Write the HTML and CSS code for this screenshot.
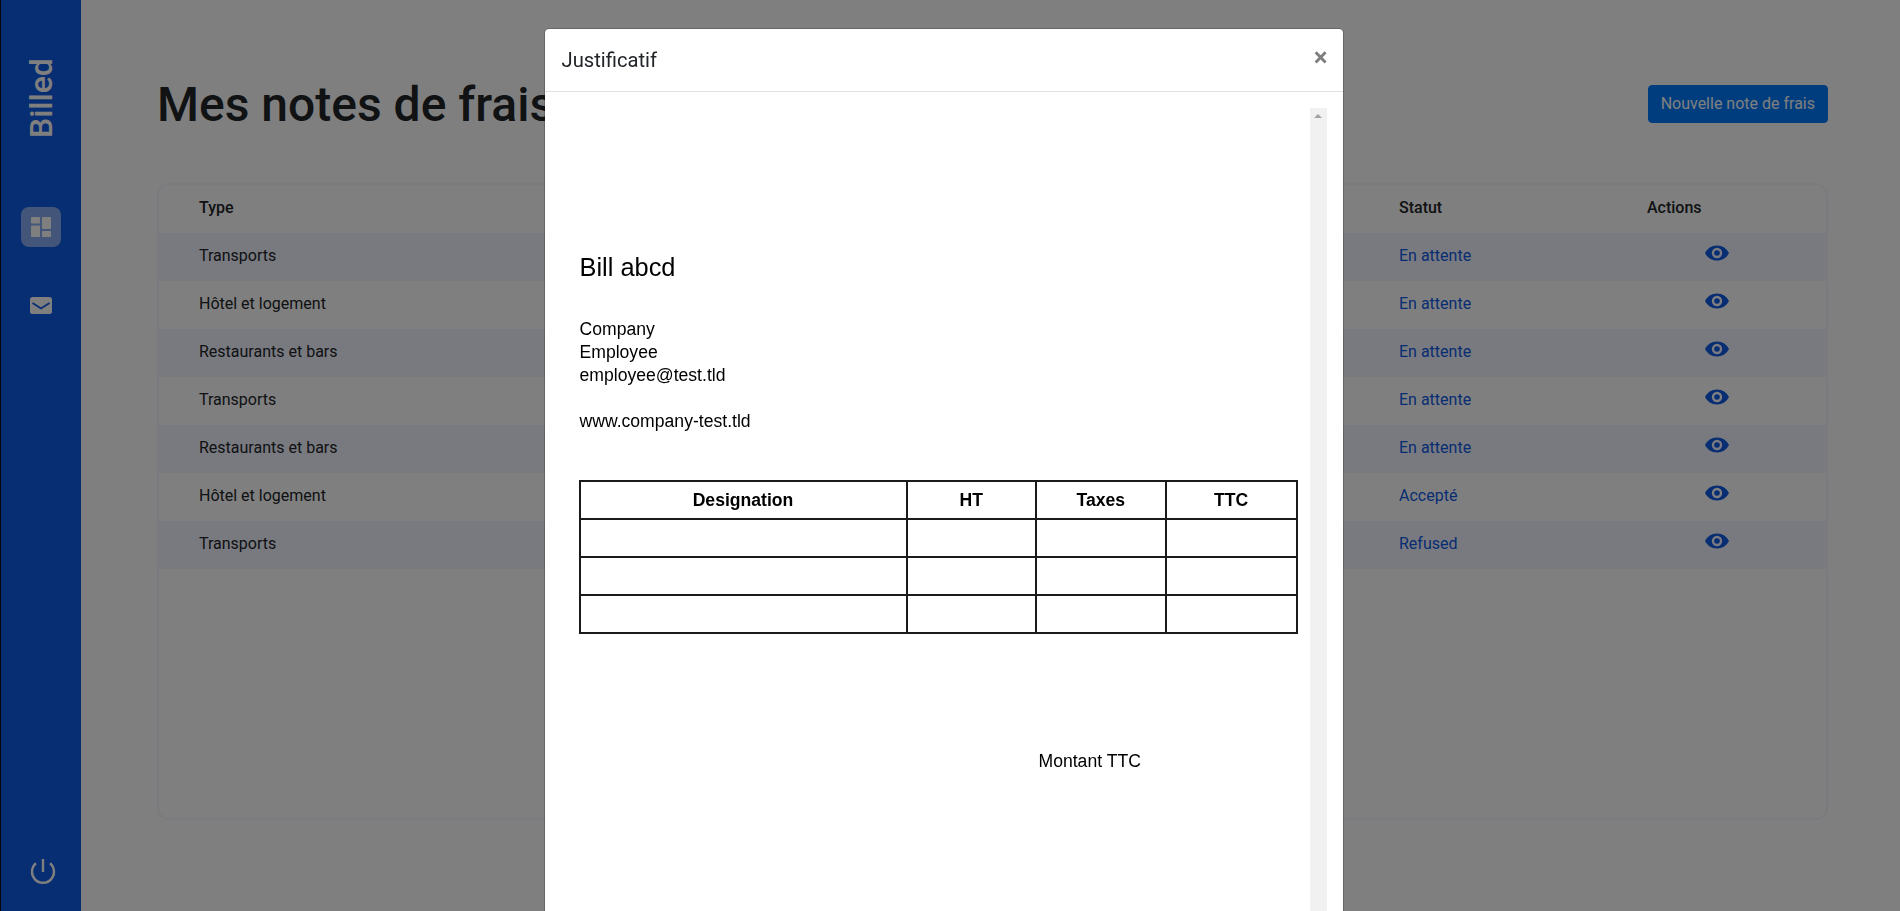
FILE: index.html
```html
<!DOCTYPE html>
<html lang="fr">
<head>
<meta charset="utf-8">
<title>Billed</title>
<link rel="stylesheet" href="styles.css">
</head>
<body>
<svg class="defs" width="0" height="0" aria-hidden="true"><defs><symbol id="eye" viewBox="0 0 24 16"><path fill-rule="evenodd" d="M12 .5C6.5.500 2.200 3.500 0 8c2.200 4.500 6.500 7.500 12 7.500S21.800 12.500 24 8C21.800 3.500 17.500.500 12 .500zm0 12.700a5.200 5.200 0 1 1 0-10.400 5.200 5.200 0 0 1 0 10.400zM12 5.200a2.800 2.800 0 1 0 0 5.600 2.800 2.800 0 0 0 0-5.600z"/></symbol></defs></svg>
<div class="layout">
  <aside class="sidebar">
    <div class="logo"><span class="logo-text">Billed</span></div>
    <div class="nav-icon active">
      <svg width="20" height="20" viewBox="0 0 20 20"><g fill="#fff"><rect x="0" y="0" width="9" height="6.500" rx=".8"/><rect x="11" y="0" width="9" height="12" rx=".8"/><rect x="0" y="8.500" width="9" height="11.500" rx=".8"/><rect x="11" y="14" width="9" height="6" rx=".8"/></g></svg>
    </div>
    <div class="nav-icon">
      <svg width="22" height="17" viewBox="0 0 22 17"><rect class="mail-body" width="22" height="17" rx="2.500"/><path class="mail-flap" d="M2.500 6l8.500 5.500L19.500 6"/></svg>
    </div>
    <div class="power">
      <svg width="26" height="26" viewBox="0 0 26 26"><path class="power-line" d="M6 4.300A11 11 0 1 0 20 4.300M13 0v13"/></svg>
    </div>
  </aside>
  <main class="content">
    <header class="page-head">
      <h1 class="title">Mes notes de frais</h1>
      <button class="btn-new" type="button">Nouvelle note de frais</button>
    </header>
    <section class="bills">
      <table class="bills-table">
        <thead>
          <tr><th class="col-type">Type</th><th class="col-status">Statut</th><th class="col-actions">Actions</th></tr>
        </thead>
        <tbody>
          <tr><td>Transports</td><td class="status">En attente</td><td class="eye-cell"><svg class="eye"><use href="#eye"/></svg></td></tr>
          <tr><td>Hôtel et logement</td><td class="status">En attente</td><td class="eye-cell"><svg class="eye"><use href="#eye"/></svg></td></tr>
          <tr><td>Restaurants et bars</td><td class="status">En attente</td><td class="eye-cell"><svg class="eye"><use href="#eye"/></svg></td></tr>
          <tr><td>Transports</td><td class="status">En attente</td><td class="eye-cell"><svg class="eye"><use href="#eye"/></svg></td></tr>
          <tr><td>Restaurants et bars</td><td class="status">En attente</td><td class="eye-cell"><svg class="eye"><use href="#eye"/></svg></td></tr>
          <tr><td>Hôtel et logement</td><td class="status">Accepté</td><td class="eye-cell"><svg class="eye"><use href="#eye"/></svg></td></tr>
          <tr><td>Transports</td><td class="status">Refused</td><td class="eye-cell"><svg class="eye"><use href="#eye"/></svg></td></tr>
        </tbody>
      </table>
    </section>
  </main>
</div>
<div class="backdrop"></div>
<div class="modal">
  <div class="modal-box">
    <div class="modal-header">
      <h5 class="modal-title">Justificatif</h5>
      <span class="close">×</span>
    </div>
    <div class="modal-body">
      <div class="pdf">
        <div class="doc">
          <div class="doc-title">Bill abcd</div>
          <div class="doc-lines">Company<br>Employee<br>employee@test.tld</div>
          <div class="doc-site">www.company-test.tld</div>
          <table class="doc-table">
            <tr><th class="d1">Designation</th><th class="d2">HT</th><th class="d2">Taxes</th><th>TTC</th></tr>
            <tr><td></td><td></td><td></td><td></td></tr>
            <tr><td></td><td></td><td></td><td></td></tr>
            <tr><td></td><td></td><td></td><td></td></tr>
          </table>
          <div class="doc-total">Montant TTC</div>
        </div>
        <div class="scrollbar"><span class="arrow"></span></div>
      </div>
    </div>
  </div>
</div>
</body>
</html>
```
FILE: styles.css
```css
* { box-sizing: border-box; }
html, body { height: 100%; margin: 0; overflow: hidden; }
body { font-family: Roboto, "Liberation Sans", sans-serif; font-size: 16px; line-height: 1.5; color: #212529; background: #fff; }
.defs { position: absolute; }
.layout { display: flex; height: 911px; }
.sidebar { width: 81px; flex: none; background: #0e5ae5; border-left: 1px solid #0a0a14; display: flex; flex-direction: column; align-items: center; }
.logo { height: 207px; padding-top: 60px; display: flex; justify-content: center; }
.logo-text { writing-mode: vertical-rl; transform: rotate(180deg); font-family: Roboto, sans-serif; font-weight: 500; font-size: 32px; line-height: 1; color: #fff; height: 78px; }
.nav-icon { width: 40px; height: 40px; margin-bottom: 38px; display: flex; align-items: center; justify-content: center; border-radius: 8px; }
.nav-icon.active { background: rgba(255,255,255,.5); }
.mail-body { fill: #fff; }
.mail-flap { fill: none; stroke: #0e5ae5; stroke-width: 1.8; }
.power { margin-top: auto; margin-bottom: 26px; margin-left: 3px; height: 26px; display: flex; }
.power-line { fill: none; stroke: #fff; stroke-width: 2.4; }
.content { flex: 1; padding: 0 72px 91px 76px; display: flex; flex-direction: column; min-width: 0; }
.page-head { display: flex; justify-content: space-between; align-items: center; height: 183px; padding-top: 24px; }
.title { margin: 2px 0 0; font-size: 48px; font-weight: 500; line-height: 1.2; }
.btn-new { height: 38px; padding: 0 12px; border: 1px solid #007bff; background: #007bff; color: #fff; border-radius: 4px; font: 400 16px/1.5 Roboto, sans-serif; }
.bills { flex: 1; border: 2px solid #f6f5ff; border-radius: 12px; overflow: hidden; }
.bills-table { width: 100%; border-collapse: collapse; table-layout: fixed; }
.bills-table th { height: 48px; padding: 0 0 2px; text-align: left; font-weight: 500; }
.bills-table td { height: 48px; padding: 0 0 2px; }
.col-type { padding-left: 40px !important; width: 1240px; }
.col-status { width: 248px; }
.bills-table td:first-child { padding-left: 40px; }
.bills-table tbody tr:nth-child(odd) { background: #f2f4ff; }
.status { color: #0e5ae5; }
.eye-cell { padding-left: 58px !important; }
.eye { display: block; width: 24px; height: 16px; fill: #0e5ae5; position: relative; top: -3px; }
.backdrop { position: fixed; inset: 0; background: rgba(0,0,0,.5); }
.modal { position: fixed; inset: 0; overflow: hidden; padding-right: 13px; }
.modal-box { width: 800px; margin: 28px auto 0; height: 1000px; background: #fff; border: 1px solid rgba(0,0,0,.2); border-radius: 5px; background-clip: padding-box; }
.modal-header { height: 63px; padding: 0 16px 0 17px; display: flex; justify-content: space-between; align-items: center; border-bottom: 1px solid #dee2e6; }
.modal-title { margin: 0; font-size: 20.2px; font-weight: 400; line-height: 1.5; }
.close { font-family: Roboto, sans-serif; font-size: 26px; font-weight: 700; color: #000; opacity: .5; line-height: 1; position: relative; top: -3px; left: 1px; }
.modal-body { padding: 16px; }
.pdf { position: relative; display: flex; height: 900px; }
.doc { flex: 1; padding: 143px 0 0 19px; font-family: "Liberation Sans", sans-serif; font-size: 17.6px; line-height: 23px; color: #000; }
.doc-title { font-size: 25.4px; line-height: 32px; margin-bottom: 35px; }
.doc-site { margin-top: 23px; }
.doc-table { margin: 47px 0 0 -1px; width: 719px; border-collapse: collapse; }
.doc-table th, .doc-table td { border: 2px solid #1a1a1a; height: 38px; padding: 0; font-weight: 700; }
.doc-table .d1 { width: 327px; }
.doc-table .d2 { width: 129.5px; }
.doc-total { margin: 116px 0 0 459px; }
.scrollbar { width: 17px; flex: none; background: #f1f1f1; display: flex; justify-content: center; padding-top: 6px; }
.arrow { width: 0; height: 0; border-left: 4px solid transparent; border-right: 4px solid transparent; border-bottom: 4px solid #a3a3a3; }
```
